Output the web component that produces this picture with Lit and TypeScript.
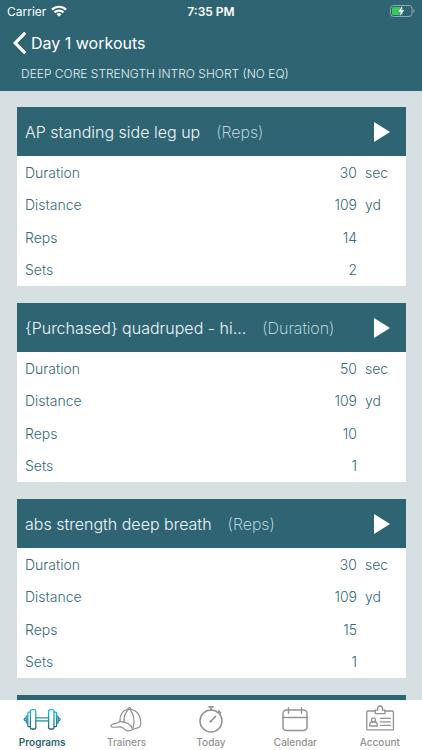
import { LitElement, html, css, svg, nothing } from "lit";
import { customElement, property, state } from "lit/decorators.js";
import { classMap } from "lit/directives/class-map.js";

interface Metric {
  label: string;
  value: number;
  unit: string;
}

interface Workout {
  title: string;
  kind: string;
  metrics: Metric[];
}

const workout = (title: string, kind: string, sec: number, reps: number, sets: number): Workout => ({
  title,
  kind,
  metrics: [
    { label: "Duration", value: sec, unit: "sec" },
    { label: "Distance", value: 109, unit: "yd" },
    { label: "Reps", value: reps, unit: "" },
    { label: "Sets", value: sets, unit: "" },
  ],
});

const WORKOUTS: Workout[] = [
  workout("AP standing side leg up", "Reps", 30, 14, 2),
  workout("{Purchased} quadruped - hi...", "Duration", 50, 10, 1),
  workout("abs strength deep breath", "Reps", 30, 15, 1),
];

const PENDING: Workout = { title: "", kind: "", metrics: [] };

const ICONS = {
  programs: svg`
    <defs>
      <linearGradient id="steel" x1="0" y1="4" x2="0" y2="25" gradientUnits="userSpaceOnUse">
        <stop offset="0" stop-color="#1fc0e4" />
        <stop offset="1" stop-color="#2c5f70" />
      </linearGradient>
    </defs>
    <g stroke="url(#steel)" stroke-width="1.3">
      <rect x="8.4" y="4.6" width="5.4" height="19.4" rx="1.6" />
      <rect x="26.6" y="4.6" width="5.4" height="19.4" rx="1.6" />
      <path d="M8.4 7.2H6.900q-1.100 0-1.100 1.200v12q0 1.200 1.100 1.200h1.500M5.800 10.800q-1.600 0-1.600 1.200v5q0 1.200 1.600 1.200M4.200 13q-2 .2-2 1.400t2 1.400" />
      <path d="M32 7.200h1.500q1.100 0 1.100 1.200v12q0 1.200-1.100 1.200H32M34.600 10.800q1.600 0 1.600 1.200v5q0 1.200-1.600 1.200M36.200 13q2 .2 2 1.400t-2 1.400" />
      <path d="M13.800 12.900h12.800M13.800 15.900h12.800" />
    </g>`,
  trainers: svg`
    <g stroke-width="1.2">
      <path d="M13 16.600C12.600 10 15.500 4.300 22.300 4.300c7.500 0 11.900 6.900 11.400 14.500-.1 2.200-.5 3.300-2.200 3.800l-5.700 1.700" />
      <path d="M13 16.600C10.500 18.500 7.500 18.600 5.200 19.200c-2 .7-1.600 2.700.4 3 3 .4 6-.9 8.800-.1 2.600.9 3.200 3.300 6.400 3.700 2.200.2 3.900-.4 5-1.500C24.300 19.600 18.800 16.300 13 16.600Z" />
      <path d="M21.800 4.300c-3.800 3.200-5.300 7.400-4.700 12.900M23 4.300c3.700 4.500 4.800 11.200 3.200 18.400M20.900 4.200c0-2.200 2.900-2.200 2.900 0" />
    </g>`,
  today: svg`
    <circle cx="20" cy="16" r="11" stroke-width="1.5" />
    <path d="M20 5V2.200M18 1.900h4M27.600 5.900l2 2M20 16l4.600-4.600" stroke-width="1.600" />
    <circle cx="19.700" cy="16.300" r="1.200" fill="currentColor" stroke="none" />`,
  calendar: svg`
    <rect x="8" y="5" width="24" height="20.500" rx="3.500" stroke-width="1.500" />
    <path d="M8 12.500h24M13.500 2.800v5.400M26.500 2.800v5.400" stroke-width="1.400" />`,
  account: svg`
    <g stroke-width="1.300">
      <path d="M15.200 6H7.700q-.9 0-.9.900v17q0 .9.900.9h24.800q.9 0 .9-.9v-17q0-.9-.9-.9H25" />
      <path d="M15.200 8.600V5.200h2.600V3.300q0-2.300 2.300-2.300t2.300 2.300v1.900H25v3.400Z" />
      <circle cx="13.500" cy="14.800" r="2" />
      <path d="M9.800 21v-1.400q0-2.300 2.300-2.600h2.800q2.300.3 2.300 2.600V21Z" />
      <path d="M20.400 13.400h10M20.400 16.800h10M20.400 20.400h10" />
    </g>`,
};

const TABS: { id: keyof typeof ICONS; label: string }[] = [
  { id: "programs", label: "Programs" },
  { id: "trainers", label: "Trainers" },
  { id: "today", label: "Today" },
  { id: "calendar", label: "Calendar" },
  { id: "account", label: "Account" },
];

@customElement("workout-card")
class WorkoutCard extends LitElement {
  @property({ attribute: false }) workout!: Workout;

  static styles = css`
    :host {
      display: block;
      background: #fff;
      color: #37697a;
    }
    .head {
      display: flex;
      align-items: center;
      box-sizing: border-box;
      height: 49px;
      padding: 0 16px 0 8px;
      background: #2f6573;
      color: #eef6f8;
    }
    .title {
      margin: 0 16px 0 0;
      font-size: 16px;
      font-weight: 300;
      white-space: nowrap;
    }
    .kind {
      flex: 1;
      font-size: 16px;
      font-weight: 200;
      color: #d3e6ea;
    }
    .play {
      display: flex;
      padding: 0;
      border: 0;
      background: none;
      color: #fff;
    }
    .metrics {
      width: 100%;
      height: 130px;
      border-collapse: collapse;
      font-size: 14px;
      font-weight: 300;
    }
    .label,
    .value,
    .unit {
      padding: 0;
      font-weight: 300;
    }
    .label {
      padding-left: 8px;
      text-align: left;
    }
    .value {
      text-align: right;
    }
    .unit {
      width: 41px;
      padding-left: 8px;
    }
  `;

  render() {
    const { title, kind, metrics } = this.workout;
    if (!title) return html`<div class="head"></div>`;
    return html`
      <div class="head">
        <h2 class="title">${title}</h2>
        <span class="kind">(${kind})</span>
        <button class="play" aria-label="Play ${title}">
          <svg width="16" height="20" viewBox="0 0 16 20"><path d="M0 0 16 10 0 20Z" fill="currentColor" /></svg>
        </button>
      </div>
      <table class="metrics">
        <tbody>
          ${metrics.map(
            (m) => html`<tr>
              <th class="label" scope="row">${m.label}</th>
              <td class="value">${m.value}</td>
              <td class="unit">${m.unit || nothing}</td>
            </tr>`
          )}
        </tbody>
      </table>
    `;
  }
}

@customElement("app-root")
class AppRoot extends LitElement {
  @state() private tab = "programs";

  static styles = css`
    :host {
      display: flex;
      flex-direction: column;
      height: 100vh;
      overflow: hidden;
      background: #d6e0e2;
      font-family: Inter, "Liberation Sans", sans-serif;
    }
    .top {
      flex: none;
      background: #2f6573;
      color: #fff;
    }
    .status {
      display: grid;
      grid-template-columns: 1fr auto 1fr;
      align-items: center;
      height: 22px;
      padding: 0 7px;
      font-size: 12px;
    }
    .carrier {
      display: flex;
      align-items: center;
      gap: 5px;
    }
    .clock {
      font-weight: 600;
    }
    .battery {
      justify-self: end;
    }
    .nav {
      display: flex;
      align-items: center;
      height: 42px;
      padding-left: 13px;
    }
    .back {
      display: flex;
      align-items: center;
      gap: 5px;
      padding: 0;
      border: 0;
      background: none;
      color: inherit;
      font: inherit;
      font-size: 16px;
    }
    .program {
      margin: 0;
      padding: 0 21px;
      height: 27px;
      line-height: 20px;
      font-size: 12px;
      font-weight: 300;
      color: #e3eff2;
    }
    .list {
      flex: 1;
      min-height: 0;
      display: flex;
      flex-direction: column;
      gap: 17px;
      padding: 16px 16px 0 17px;
      overflow-y: auto;
      scrollbar-width: none;
    }
    .card {
      flex: none;
    }
    .tabs {
      flex: none;
      display: grid;
      grid-template-columns: repeat(5, 1fr);
      height: 50px;
      background: #fff;
    }
    .tab {
      display: flex;
      flex-direction: column;
      align-items: center;
      padding: 5px 0 0;
      border: 0;
      background: none;
      color: #929292;
      font: inherit;
      font-size: 10px;
      line-height: 14px;
      font-weight: 500;
    }
    .active {
      color: #2f6573;
      font-weight: 600;
    }
    .icon {
      width: 40px;
      height: 30px;
      fill: none;
      stroke: currentColor;
      stroke-linecap: round;
      stroke-linejoin: round;
    }
  `;

  render() {
    return html`
      <header class="top">
        <div class="status">
          <span class="carrier">
            Carrier
            <svg width="16" height="12" viewBox="0 0 16 12" fill="none" stroke="#fff" stroke-width="2.200">
              <path d="M1 4.600a10 10 0 0 1 14 0M3.500 7.400a6.400 6.400 0 0 1 9 0" />
              <path d="M8 11.800 5.500 9.200a3.600 3.600 0 0 1 5 0Z" fill="#fff" stroke="none" />
            </svg>
          </span>
          <span class="clock">7:35 PM</span>
          <svg class="battery" width="25" height="12" viewBox="0 0 25 12">
            <rect x="0.500" y="0.500" width="21.500" height="11" rx="3" fill="none" stroke="#8daab2" />
            <path d="M23.300 4q1.300.6 1.300 2t-1.300 2Z" fill="#8daab2" />
            <rect x="2" y="2" width="11" height="8" rx="1.500" fill="#34cb5b" />
            <path d="M12.300 1 7.900 6.700h2.800L9.700 11l4.600-5.700h-2.900Z" fill="#fff" stroke="#2f6573" stroke-width="1" paint-order="stroke" />
          </svg>
        </div>
        <nav class="nav">
          <button class="back">
            <svg width="13" height="22" viewBox="0 0 13 22" fill="none" stroke="#fff" stroke-width="3.200">
              <path d="M11.200 1.800 2.200 11l9 9.200" stroke-linecap="round" />
            </svg>
            Day 1 workouts
          </button>
        </nav>
        <h1 class="program">DEEP CORE STRENGTH INTRO SHORT (NO EQ)</h1>
      </header>
      <main class="list">
        ${[...WORKOUTS, PENDING].map((w) => html`<workout-card class="card" .workout=${w}></workout-card>`)}
      </main>
      <nav class="tabs">
        ${TABS.map(
          (t) => html`<button
            class=${classMap({ tab: true, active: this.tab === t.id })}
            @click=${() => (this.tab = t.id)}
          >
            <svg class="icon" viewBox="0 0 40 30">${ICONS[t.id]}</svg>
            ${t.label}
          </button>`
        )}
      </nav>
    `;
  }
}
